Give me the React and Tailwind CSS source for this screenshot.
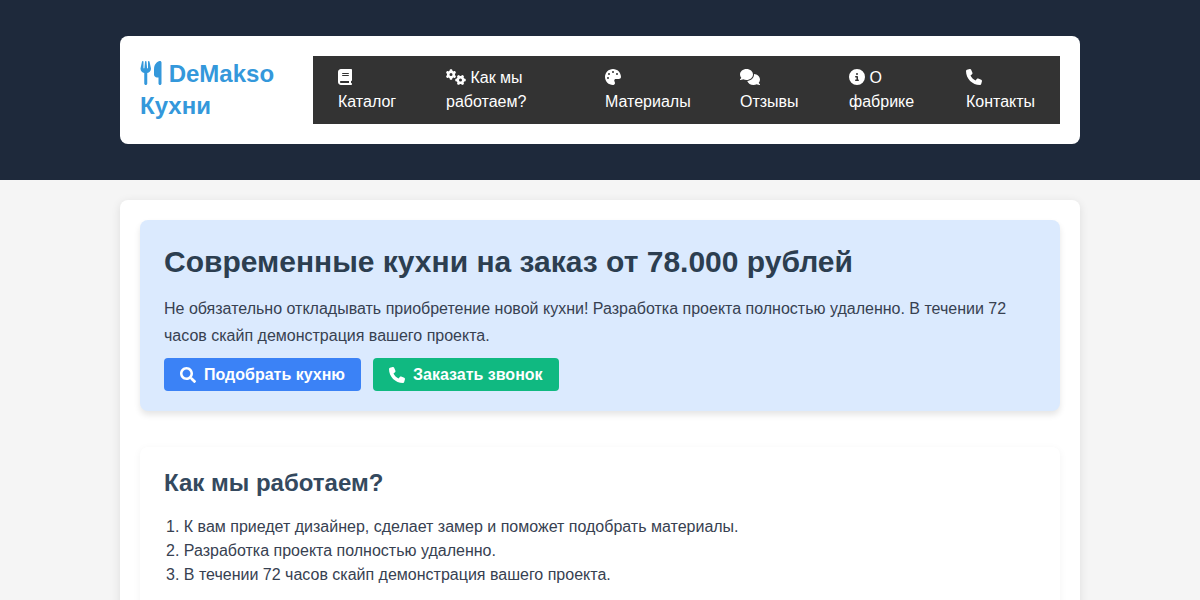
import React from 'react';
import { FaUtensils, FaBook, FaGears, FaPalette, FaComments, FaCircleInfo, FaPhone } from 'react-icons/fa6';
import { FaSearch } from 'react-icons/fa';

const navItems = [
  { icon: FaBook, iconClass: 'h-4 w-[14px]', width: 'w-[108px]', label: 'Каталог' },
  { icon: FaGears, iconClass: 'h-4 w-5', width: 'w-[159px]', label: 'Как мы работаем?' },
  { icon: FaPalette, iconClass: 'h-4 w-4', width: 'w-[135px]', label: 'Материалы' },
  { icon: FaComments, iconClass: 'h-4 w-5', width: 'w-[109px]', label: 'Отзывы' },
  { icon: FaCircleInfo, iconClass: 'h-4 w-4', width: 'w-[117px]', label: 'О фабрике' },
  { icon: FaPhone, iconClass: 'h-4 w-4', width: 'w-[119px]', label: 'Контакты' },
];

const steps = [
  'К вам приедет дизайнер, сделает замер и поможет подобрать материалы.',
  'Разработка проекта полностью удаленно.',
  'В течении 72 часов скайп демонстрация вашего проекта.',
];

export default function App() {
  return (
    <div className="h-[600px] overflow-hidden bg-[#f5f5f5] font-['Liberation_Sans',Arial,sans-serif] text-[16px] text-[#333333]">
      {/* Header */}
      <header className="bg-[#1e293b] py-9">
        <div className="mx-auto flex w-[960px] items-center justify-between rounded-lg bg-white p-5">
          <div className="w-[173px] text-[24px] leading-[32px] font-bold text-[#3498db]">
            <FaUtensils className="inline-block h-6 w-[22px] align-[-3px]" /> DeMakso Кухни
          </div>
          <nav className="flex w-[747px] bg-[#333333]">
            {navItems.map(({ icon: Icon, iconClass, width, label }) => (
              <a key={label} className={`block shrink-0 px-[25px] py-2.5 leading-6 text-white ${width}`}>
                <Icon className={`inline-block align-[-2px] ${iconClass}`} /> {label}
              </a>
            ))}
          </nav>
        </div>
      </header>

      {/* Main card */}
      <main className="mx-auto mt-5 w-[960px] rounded-lg bg-white p-5 shadow-[0_2px_10px_rgba(0,0,0,0.1)]">
        <section className="mb-9 rounded-lg bg-[#dbeafe] px-6 pt-6 pb-5 shadow-[0_4px_6px_rgba(0,0,0,0.1)]">
          <h1 className="mb-[15px] text-[30px] leading-[36px] font-bold text-[#2c3e50]">
            Современные кухни на заказ от 78.000 рублей
          </h1>
          <p className="mb-[9px] leading-[27px] text-[#374151]">
            Не обязательно откладывать приобретение новой кухни! Разработка проекта полностью удаленно. В течении 72 часов скайп демонстрация вашего проекта.
          </p>
          <div className="flex gap-3">
            <button className="flex h-[33px] items-center gap-2 rounded bg-[#3b82f6] px-4 font-bold text-white">
              <FaSearch className="h-4 w-4" /> Подобрать кухню
            </button>
            <button className="flex h-[33px] items-center gap-2 rounded bg-[#10b981] px-4 font-bold text-white">
              <FaPhone className="h-4 w-4" /> Заказать звонок
            </button>
          </div>
        </section>

        <section className="rounded-lg bg-white px-6 pt-[21px] pb-6 shadow-[0_2px_8px_rgba(0,0,0,0.05)]">
          <h2 className="mb-[18px] text-[24px] leading-[29px] font-bold text-[#34495e]">Как мы работаем?</h2>
          <ol className="list-inside list-decimal pl-0.5 leading-6 text-[#374151]">
            {steps.map((s) => (
              <li key={s}>{s}</li>
            ))}
          </ol>
        </section>
      </main>
    </div>
  );
}
